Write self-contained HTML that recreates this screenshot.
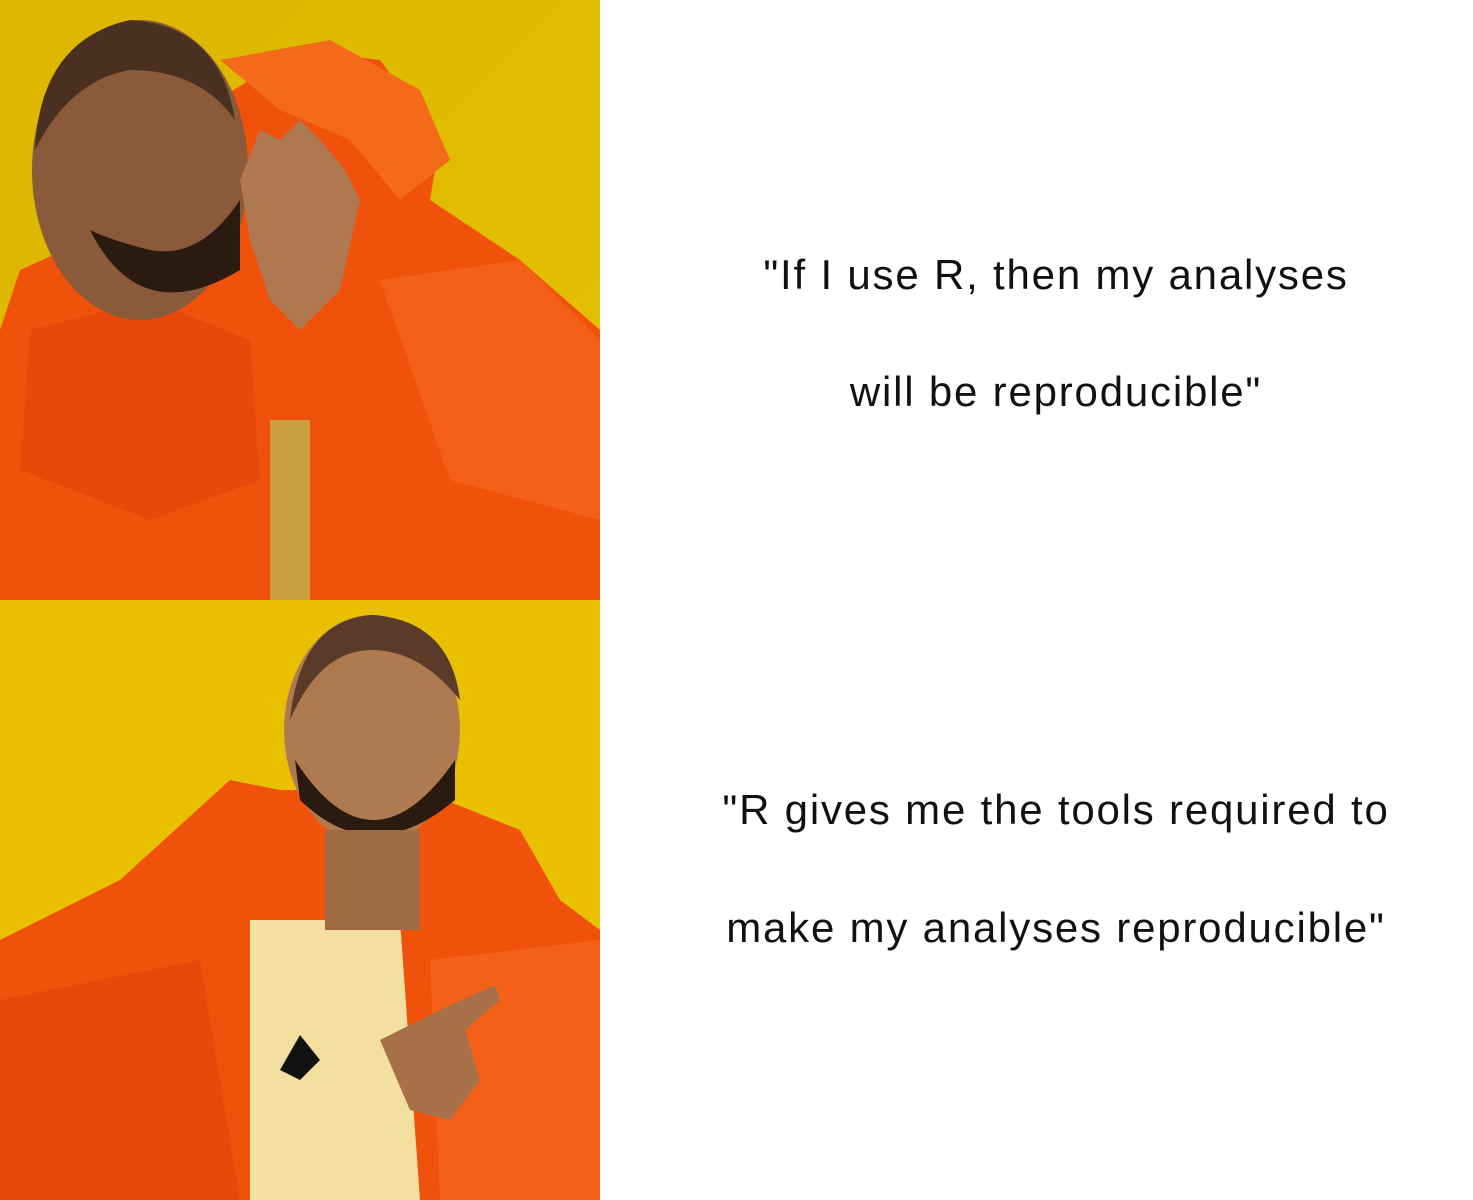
<!DOCTYPE html>
<html><head><meta charset="utf-8"><style>
html,body{margin:0;padding:0;width:1473px;height:1200px;background:#fff;overflow:hidden}
.t{position:absolute;left:600px;width:912px;text-align:center;font-family:"Liberation Sans",sans-serif;font-size:42px;letter-spacing:1.8px;line-height:48px;color:#111;white-space:nowrap}
</style></head><body>
<svg width="600" height="1200" style="position:absolute;left:0;top:0">
<defs>
<linearGradient id="y1" x1="0" y1="0" x2="1" y2="1"><stop offset="0" stop-color="#dcb600"/><stop offset="1" stop-color="#e6c000"/></linearGradient>
</defs>
<rect x="0" y="0" width="600" height="600" fill="url(#y1)"/>
<rect x="0" y="600" width="600" height="600" fill="#e8c000"/>
<path d="M20 270 L110 230 L200 110 L300 50 L380 60 L440 140 L430 200 L520 260 L600 330 L600 600 L0 600 L0 330 Z" fill="#f0520c"/>
<path d="M220 60 L330 40 L420 90 L450 160 L400 200 L350 140 L280 110 Z" fill="#f26a1a"/>
<path d="M30 330 L150 300 L250 340 L260 480 L150 520 L20 470 Z" fill="#e8480a"/>
<path d="M380 280 L520 260 L600 340 L600 520 L450 480 Z" fill="#f46018"/>
<rect x="270" y="420" width="40" height="180" fill="#c8a040"/>
<ellipse cx="140" cy="170" rx="108" ry="150" fill="#8a5a3a"/>
<path d="M35 150 Q40 40 130 20 Q220 25 235 120 Q200 70 130 70 Q70 80 35 150Z" fill="#4a3020"/>
<path d="M90 230 Q140 330 240 270 L240 200 Q200 260 150 250 Q110 240 90 230Z" fill="#2a1a10"/>
<path d="M240 180 L260 130 L280 140 L300 120 L320 140 L345 170 L360 200 L340 290 L300 330 L270 300 L250 240 Z" fill="#b07850"/>
<path d="M0 940 L120 880 L230 780 L280 790 L420 790 L520 830 L560 900 L600 930 L600 1200 L0 1200 Z" fill="#f0520c"/>
<path d="M250 920 L400 920 L420 1200 L250 1200 Z" fill="#f3e0a0"/>
<path d="M0 1000 L200 960 L240 1200 L0 1200Z" fill="#e8480a"/>
<path d="M430 960 L600 940 L600 1200 L440 1200Z" fill="#f46018"/>
<ellipse cx="372" cy="730" rx="88" ry="115" fill="#b07a50"/>
<path d="M290 720 Q300 620 372 615 Q450 620 460 700 Q420 650 372 650 Q320 650 290 720Z" fill="#5a3a28"/>
<path d="M295 760 Q372 880 455 760 L455 800 Q372 870 300 800Z" fill="#2a1a10"/>
<rect x="325" y="830" width="95" height="100" fill="#a06a45"/>
<path d="M380 1040 L440 1010 L495 985 L500 1000 L465 1030 L480 1080 L450 1120 L410 1110 Z" fill="#a87048"/>
<path d="M300 1035 L320 1060 L300 1080 L280 1070Z" fill="#111"/>
</svg>
<div class="t" style="top:251px">"If I use R, then my analyses</div>
<div class="t" style="top:368px">will be reproducible"</div>
<div class="t" style="top:786px">"R gives me the tools required to</div>
<div class="t" style="top:904px">make my analyses reproducible"</div>
</body></html>
